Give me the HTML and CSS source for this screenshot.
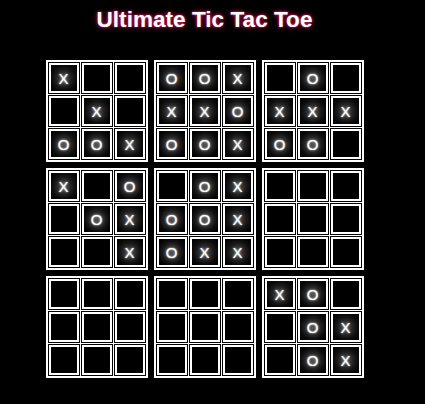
FILE: index.html
```html
<!DOCTYPE html>
<html>
<head>
<meta charset="utf-8">
<link rel="stylesheet" href="styles.css">
</head>
<body>
<div class="page">
  <h1 class="title">Ultimate Tic Tac Toe</h1>
  <div class="ultimate">
    <div class="board">
      <div class="cell">X</div><div class="cell empty"></div><div class="cell empty"></div>
      <div class="cell empty"></div><div class="cell">X</div><div class="cell empty"></div>
      <div class="cell">O</div><div class="cell">O</div><div class="cell">X</div>
    </div>
    <div class="board">
      <div class="cell">O</div><div class="cell">O</div><div class="cell">X</div>
      <div class="cell">X</div><div class="cell">X</div><div class="cell">O</div>
      <div class="cell">O</div><div class="cell">O</div><div class="cell">X</div>
    </div>
    <div class="board">
      <div class="cell empty"></div><div class="cell">O</div><div class="cell empty"></div>
      <div class="cell">X</div><div class="cell">X</div><div class="cell">X</div>
      <div class="cell">O</div><div class="cell">O</div><div class="cell empty"></div>
    </div>
    <div class="board">
      <div class="cell">X</div><div class="cell empty"></div><div class="cell">O</div>
      <div class="cell empty"></div><div class="cell">O</div><div class="cell">X</div>
      <div class="cell empty"></div><div class="cell empty"></div><div class="cell">X</div>
    </div>
    <div class="board">
      <div class="cell empty"></div><div class="cell">O</div><div class="cell">X</div>
      <div class="cell">O</div><div class="cell">O</div><div class="cell">X</div>
      <div class="cell">O</div><div class="cell">X</div><div class="cell">X</div>
    </div>
    <div class="board">
      <div class="cell empty"></div><div class="cell empty"></div><div class="cell empty"></div>
      <div class="cell empty"></div><div class="cell empty"></div><div class="cell empty"></div>
      <div class="cell empty"></div><div class="cell empty"></div><div class="cell empty"></div>
    </div>
    <div class="board">
      <div class="cell empty"></div><div class="cell empty"></div><div class="cell empty"></div>
      <div class="cell empty"></div><div class="cell empty"></div><div class="cell empty"></div>
      <div class="cell empty"></div><div class="cell empty"></div><div class="cell empty"></div>
    </div>
    <div class="board">
      <div class="cell empty"></div><div class="cell empty"></div><div class="cell empty"></div>
      <div class="cell empty"></div><div class="cell empty"></div><div class="cell empty"></div>
      <div class="cell empty"></div><div class="cell empty"></div><div class="cell empty"></div>
    </div>
    <div class="board">
      <div class="cell">X</div><div class="cell">O</div><div class="cell empty"></div>
      <div class="cell empty"></div><div class="cell">O</div><div class="cell">X</div>
      <div class="cell empty"></div><div class="cell">O</div><div class="cell">X</div>
    </div>
  </div>
</div>
</body>
</html>
```
FILE: styles.css
```css
html, body {
  margin: 0;
  background: #000;
}
body {
  font-family: "Liberation Sans", Arial, sans-serif;
  color: #fff;
}
.page {
  width: 409px;
  display: flex;
  flex-direction: column;
  align-items: center;
}
.title {
  margin: 7px 0 0 0;
  font-size: 22.6px;
  line-height: 26px;
  font-weight: bold;
  color: #fff;
  text-shadow: 0 0 3px #ff2a6a, 0 0 6px #8a0040;
}
.ultimate {
  margin-top: 27px;
  display: grid;
  grid-template-columns: repeat(3, 102px);
  grid-auto-rows: 102px;
  gap: 6px;
}
.board {
  box-sizing: border-box;
  border: 2px solid #fff;
  padding: 1px;
  background: #fff;
  display: grid;
  grid-template-columns: 30px 30px 30px;
  grid-auto-rows: 30px;
  gap: 3px;
}
.cell {
  box-sizing: border-box;
  border: 2px solid #fff;
  background: radial-gradient(circle at center, #333 0%, #1e1e1e 35%, #0a0a0a 70%, #000 95%);
  box-shadow: 0 0 0 1px #000;
  display: flex;
  align-items: center;
  justify-content: center;
  font-size: 15px;
  color: #fff;
  text-shadow: 0 0 2px #fff, 0 0 7px rgba(255,255,255,0.7);
}
.cell.empty {
  background: #000;
}
```
